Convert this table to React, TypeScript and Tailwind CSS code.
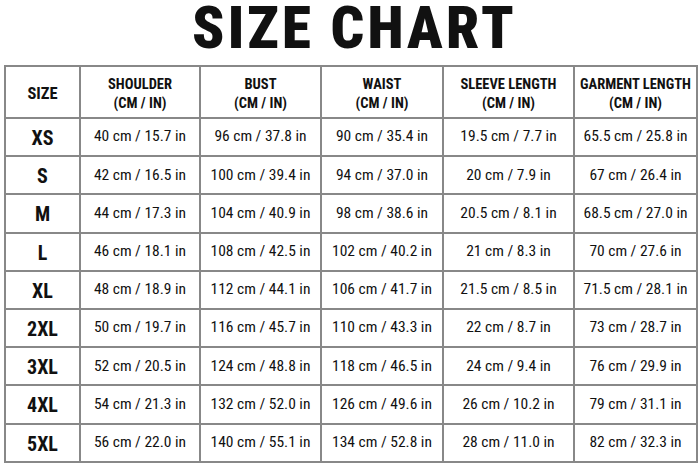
const headers = [
  { label: 'SHOULDER', sub: '(CM / IN)' },
  { label: 'BUST', sub: '(CM / IN)' },
  { label: 'WAIST', sub: '(CM / IN)' },
  { label: 'SLEEVE LENGTH', sub: '(CM / IN)' },
  { label: 'GARMENT LENGTH', sub: '(CM / IN)' },
];

const rows = [
  ['XS', '40 cm / 15.7 in', '96 cm / 37.8 in', '90 cm / 35.4 in', '19.5 cm / 7.7 in', '65.5 cm / 25.8 in'],
  ['S', '42 cm / 16.5 in', '100 cm / 39.4 in', '94 cm / 37.0 in', '20 cm / 7.9 in', '67 cm / 26.4 in'],
  ['M', '44 cm / 17.3 in', '104 cm / 40.9 in', '98 cm / 38.6 in', '20.5 cm / 8.1 in', '68.5 cm / 27.0 in'],
  ['L', '46 cm / 18.1 in', '108 cm / 42.5 in', '102 cm / 40.2 in', '21 cm / 8.3 in', '70 cm / 27.6 in'],
  ['XL', '48 cm / 18.9 in', '112 cm / 44.1 in', '106 cm / 41.7 in', '21.5 cm / 8.5 in', '71.5 cm / 28.1 in'],
  ['2XL', '50 cm / 19.7 in', '116 cm / 45.7 in', '110 cm / 43.3 in', '22 cm / 8.7 in', '73 cm / 28.7 in'],
  ['3XL', '52 cm / 20.5 in', '124 cm / 48.8 in', '118 cm / 46.5 in', '24 cm / 9.4 in', '76 cm / 29.9 in'],
  ['4XL', '54 cm / 21.3 in', '132 cm / 52.0 in', '126 cm / 49.6 in', '26 cm / 10.2 in', '79 cm / 31.1 in'],
  ['5XL', '56 cm / 22.0 in', '140 cm / 55.1 in', '134 cm / 52.8 in', '28 cm / 11.0 in', '82 cm / 32.3 in'],
];

export default function App() {
  return (
    <div className="w-[700px] h-[464px] bg-white text-[#111] font-['Roboto',sans-serif] font-stretch-condensed overflow-hidden">
      <h1 className="h-[65px] pl-[9px] text-center text-[59px] leading-[56px] font-black tracking-[0.053em]">
        SIZE CHART
      </h1>
      <div className="px-[4px]">
        <table className="w-[692px] table-fixed border-collapse border-2 border-[#888] text-center">
          <colgroup>
            <col className="w-[75px]" />
            <col className="w-[120px]" />
            <col className="w-[121px]" />
            <col className="w-[122px]" />
            <col className="w-[131px]" />
            <col className="w-[123px]" />
          </colgroup>
          <thead>
            <tr className="h-[52px]">
              <th className="border-2 border-[#888] pt-[4px] text-[16.5px] font-bold">SIZE</th>
              {headers.map((h) => (
                <th key={h.label} className="border-2 border-[#888] pt-[4px] text-[14.5px] leading-[19px] font-bold">
                  <div>{h.label}</div>
                  <div>{h.sub}</div>
                </th>
              ))}
            </tr>
          </thead>
          <tbody>
            {rows.map((r) => (
              <tr key={r[0]} className="h-[38.2px]">
                <td className="border-2 border-[#888] pt-[2px] text-[20px] font-bold">{r[0]}</td>
                {r.slice(1).map((v, i) => (
                  <td key={i} className="border-2 border-[#888] text-[15.5px] text-[#111] whitespace-nowrap">
                    {v}
                  </td>
                ))}
              </tr>
            ))}
          </tbody>
        </table>
      </div>
    </div>
  );
}
